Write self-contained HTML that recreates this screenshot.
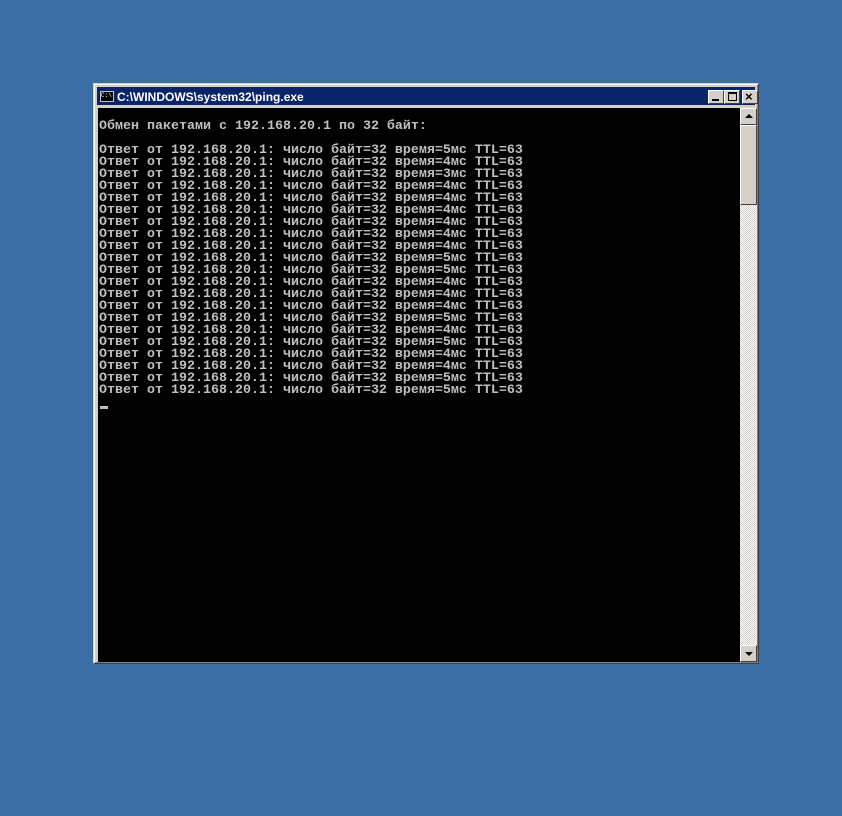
<!DOCTYPE html>
<html><head><meta charset="utf-8"><style>
body{margin:0;width:842px;height:816px;background:#3a6ea5;position:relative;overflow:hidden}
.win{position:absolute;left:93px;top:83px;width:666px;height:581px;background:#d4d0c8;box-sizing:border-box;border:1px solid;border-color:#d4d0c8 #404040 #404040 #d4d0c8;box-shadow:inset 1px 1px 0 #fff,inset -1px -1px 0 #808080}
.title{position:absolute;left:3px;top:3px;width:658px;height:18px;background:#0a246a}
.title span{position:absolute;left:20px;top:3px;color:#fff;font:bold 12px "Liberation Sans",sans-serif}
.ico{position:absolute;left:3px;top:4px;width:14px;height:11px;background:#000;border:1px solid #c0c0c0;box-sizing:border-box;color:#fff;font:6px "Liberation Mono",monospace;line-height:8px}
.btn{position:absolute;top:3px;width:16px;height:14px;background:#d4d0c8;box-sizing:border-box;border:1px solid;border-color:#fff #404040 #404040 #fff}
.con{position:absolute;left:4px;top:24px;width:642px;height:554px;background:#000}
pre{position:absolute;left:1px;top:13px;margin:0;color:#c0c0c0;font:bold 13.33px/12px "Liberation Mono","DejaVu Sans Mono",monospace;letter-spacing:0}
.sb{position:absolute;left:646px;top:24px;width:17px;height:554px;background:repeating-conic-gradient(#fff 0 25%,#d4d0c8 0 50%) 0 0/2px 2px}
.sbt{position:absolute;left:0;width:17px;height:17px;background:#d4d0c8;box-sizing:border-box;border:1px solid;border-color:#fff #404040 #404040 #fff}
</style></head><body>
<div class="win">
<div class="title"><div class="ico">C:\</div><span>C:\WINDOWS\system32\ping.exe</span>
<div class="btn" style="left:611px"><div style="position:absolute;left:3px;top:8px;width:7px;height:2px;background:#000"></div></div>
<div class="btn" style="left:627px"><div style="position:absolute;left:3px;top:1px;width:9px;height:9px;box-sizing:border-box;border:1px solid #000;border-top-width:2px"></div></div>
<div class="btn" style="left:645px"><div style="position:absolute;left:2px;top:-2px;font:bold 13px 'Liberation Sans',sans-serif">×</div></div>
</div>
<div class="con"><pre>Обмен пакетами с 192.168.20.1 по 32 байт:

Ответ от 192.168.20.1: число байт=32 время=5мс TTL=63
Ответ от 192.168.20.1: число байт=32 время=4мс TTL=63
Ответ от 192.168.20.1: число байт=32 время=3мс TTL=63
Ответ от 192.168.20.1: число байт=32 время=4мс TTL=63
Ответ от 192.168.20.1: число байт=32 время=4мс TTL=63
Ответ от 192.168.20.1: число байт=32 время=4мс TTL=63
Ответ от 192.168.20.1: число байт=32 время=4мс TTL=63
Ответ от 192.168.20.1: число байт=32 время=4мс TTL=63
Ответ от 192.168.20.1: число байт=32 время=4мс TTL=63
Ответ от 192.168.20.1: число байт=32 время=5мс TTL=63
Ответ от 192.168.20.1: число байт=32 время=5мс TTL=63
Ответ от 192.168.20.1: число байт=32 время=4мс TTL=63
Ответ от 192.168.20.1: число байт=32 время=4мс TTL=63
Ответ от 192.168.20.1: число байт=32 время=4мс TTL=63
Ответ от 192.168.20.1: число байт=32 время=5мс TTL=63
Ответ от 192.168.20.1: число байт=32 время=4мс TTL=63
Ответ от 192.168.20.1: число байт=32 время=5мс TTL=63
Ответ от 192.168.20.1: число байт=32 время=4мс TTL=63
Ответ от 192.168.20.1: число байт=32 время=4мс TTL=63
Ответ от 192.168.20.1: число байт=32 время=5мс TTL=63
Ответ от 192.168.20.1: число байт=32 время=5мс TTL=63</pre>
<div style="position:absolute;left:2px;top:298px;width:8px;height:3px;background:#c0c0c0"></div></div>
<div class="sb">
<div class="sbt" style="top:0"><div style="position:absolute;left:4px;top:5px;width:0;height:0;border:4px solid transparent;border-bottom-color:#000;border-top:0"></div></div>
<div class="sbt" style="top:17px;height:80px"></div>
<div class="sbt" style="top:537px"><div style="position:absolute;left:4px;top:6px;width:0;height:0;border:4px solid transparent;border-top-color:#000;border-bottom:0"></div></div>
</div>
</div>
</body></html>
